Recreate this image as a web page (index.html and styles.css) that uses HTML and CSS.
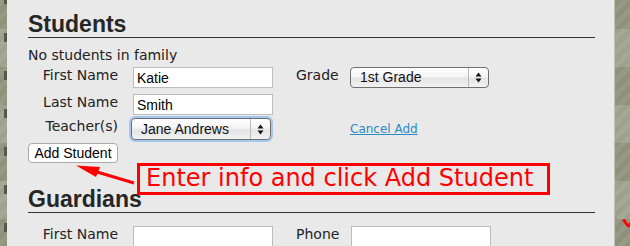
FILE: index.html
```html
<!DOCTYPE html>
<html lang="en">
<head>
  <meta charset="UTF-8">
  <title>Family - Students</title>
  <link rel="stylesheet" href="styles.css">
</head>
<body>
  <div class="panel">
    <h2 class="section-title">Students</h2>
    <p class="note">No students in family</p>

    <div class="row row-first">
      <label class="field-label">First Name</label>
      <input class="text-input" type="text" value="Katie">
      <label class="field-label side">Grade</label>
      <div class="select">
        <span class="select-text">1st Grade</span>
        <span class="select-arrows">
          <svg width="7" height="11" viewBox="0 0 7 11"><path d="M3.5 0.5 L6.5 4.5 L0.5 4.5 Z M3.5 10.5 L6.5 6.5 L0.5 6.5 Z" fill="#111"/></svg>
        </span>
      </div>
    </div>

    <div class="row row-second">
      <label class="field-label">Last Name</label>
      <input class="text-input" type="text" value="Smith">
    </div>

    <div class="row row-third">
      <label class="field-label">Teacher(s)</label>
      <div class="select select-focus">
        <span class="select-text">Jane Andrews</span>
        <span class="select-arrows">
          <svg width="7" height="11" viewBox="0 0 7 11"><path d="M3.5 0.5 L6.5 4.5 L0.5 4.5 Z M3.5 10.5 L6.5 6.5 L0.5 6.5 Z" fill="#111"/></svg>
        </span>
      </div>
      <a class="cancel-link" href="#">Cancel Add</a>
    </div>

    <button class="add-btn">Add Student</button>

    <h2 class="section-title guardians">Guardians</h2>

    <div class="row row-guardian">
      <label class="field-label">First Name</label>
      <input class="text-input" type="text">
      <label class="field-label side">Phone</label>
      <input class="text-input phone" type="text">
    </div>

    <!-- callout drawn over the form -->
    <div class="callout">Enter info and click Add Student</div>
    <svg class="callout-arrow" width="70" height="30" viewBox="70 158 70 30">
      <line x1="134" y1="183" x2="92" y2="170.5" stroke="#f00" stroke-width="3"/>
      <path d="M76 165.5 L100 167 L96 177 Z" fill="#f00"/>
    </svg>
  </div>

  <svg class="edge-mark" width="8" height="10" viewBox="0 0 8 10"><path d="M0 1 L3 0 L6 5 L8 3 L8 8 L5 8 Z" fill="#f00"/></svg>
</body>
</html>
```

FILE: styles.css
```css
* {
  box-sizing: border-box;
}

html, body {
  margin: 0;
  height: 100%;
}

body {
  overflow: hidden;
  position: relative;
  font-family: "DejaVu Sans", Verdana, sans-serif;
  color: #222;
  background:
    linear-gradient(#55584a 0 9px, transparent 9px) 4px 33px / 3px 38px repeat-y,
    repeating-linear-gradient(135deg, rgba(255,255,255,0.07) 0 5px, transparent 5px 10px),
    repeating-linear-gradient(#8f917b 0 38px, #9ea18d 38px 76px) 0 -9px;
}

.panel {
  position: relative;
  margin-left: 7px;
  width: 608px;
  height: 100%;
  background: #e9e9e9;
  border-right: 1px solid #c2c3b8;
  padding: 11px 19px 0 21px;
}

.section-title {
  margin: 0;
  font: bold 23px/26px "Liberation Sans", Arial, sans-serif;
  color: #262626;
  border-bottom: 1px solid #333;
}

.guardians {
  margin-top: 23px;
}

.note {
  margin: 9px 0 0;
  font-size: 14px;
  line-height: 16px;
}

.row {
  display: flex;
  align-items: flex-start;
}

.row-first {
  margin-top: 4px;
  height: 27px;
}

.row-second {
  height: 24px;
}

.row-third {
  height: 25px;
}

.row-guardian {
  margin-top: 13px;
}

.field-label {
  width: 90px;
  margin-right: 15px;
  text-align: right;
  font-size: 14px;
  line-height: 16px;
  color: #222;
}

.field-label.side {
  width: 54px;
  margin: 0 0 0 23px;
  text-align: left;
}

.text-input {
  width: 140px;
  height: 21px;
  margin: 0;
  padding: 1px 3px;
  border: 1px solid #bdbdbd;
  background: #fff;
  font: 14px "Liberation Sans", Arial, sans-serif;
  color: #000;
  outline: none;
}

.text-input.phone {
  width: 140px;
  margin-left: 1px;
}

.select {
  display: flex;
  align-items: stretch;
  width: 139px;
  height: 21px;
  border: 1px solid #6f6f6f;
  border-radius: 4px;
  background: linear-gradient(#ffffff, #f4f4f4 45%, #e4e4e4 55%, #f2f2f2);
  font: 14px/19px "Liberation Sans", Arial, sans-serif;
  color: #111;
}

.select-text {
  flex: 1;
  padding-left: 9px;
}

.select-arrows {
  width: 20px;
  border-left: 1px solid #b9b9b9;
  display: flex;
  align-items: center;
  justify-content: center;
}

.select-focus {
  width: 140px;
  height: 22px;
  margin-left: -2px;
  box-shadow: 0 0 0 2px #a4c7ef;
}

.select-focus .select-text {
  line-height: 20px;
}

.cancel-link {
  margin: 4px 0 0 79px;
  font-size: 12px;
  line-height: 14px;
  color: #2d89c5;
}

.add-btn {
  display: block;
  width: 90px;
  height: 20px;
  margin: 0;
  padding: 0;
  border: 1px solid #a9a9a9;
  border-radius: 4px;
  background: #fff;
  font: 14px "Liberation Sans", Arial, sans-serif;
  color: #000;
}

.callout {
  position: absolute;
  left: 130px;
  top: 163px;
  width: 413px;
  height: 32px;
  border: 3px solid #f00;
  padding-left: 6px;
  font-size: 24px;
  line-height: 25px;
  color: #f00;
  white-space: nowrap;
}

.callout-arrow {
  position: absolute;
  left: 63px;
  top: 158px;
}

.edge-mark {
  position: absolute;
  left: 622px;
  top: 219px;
}
```
